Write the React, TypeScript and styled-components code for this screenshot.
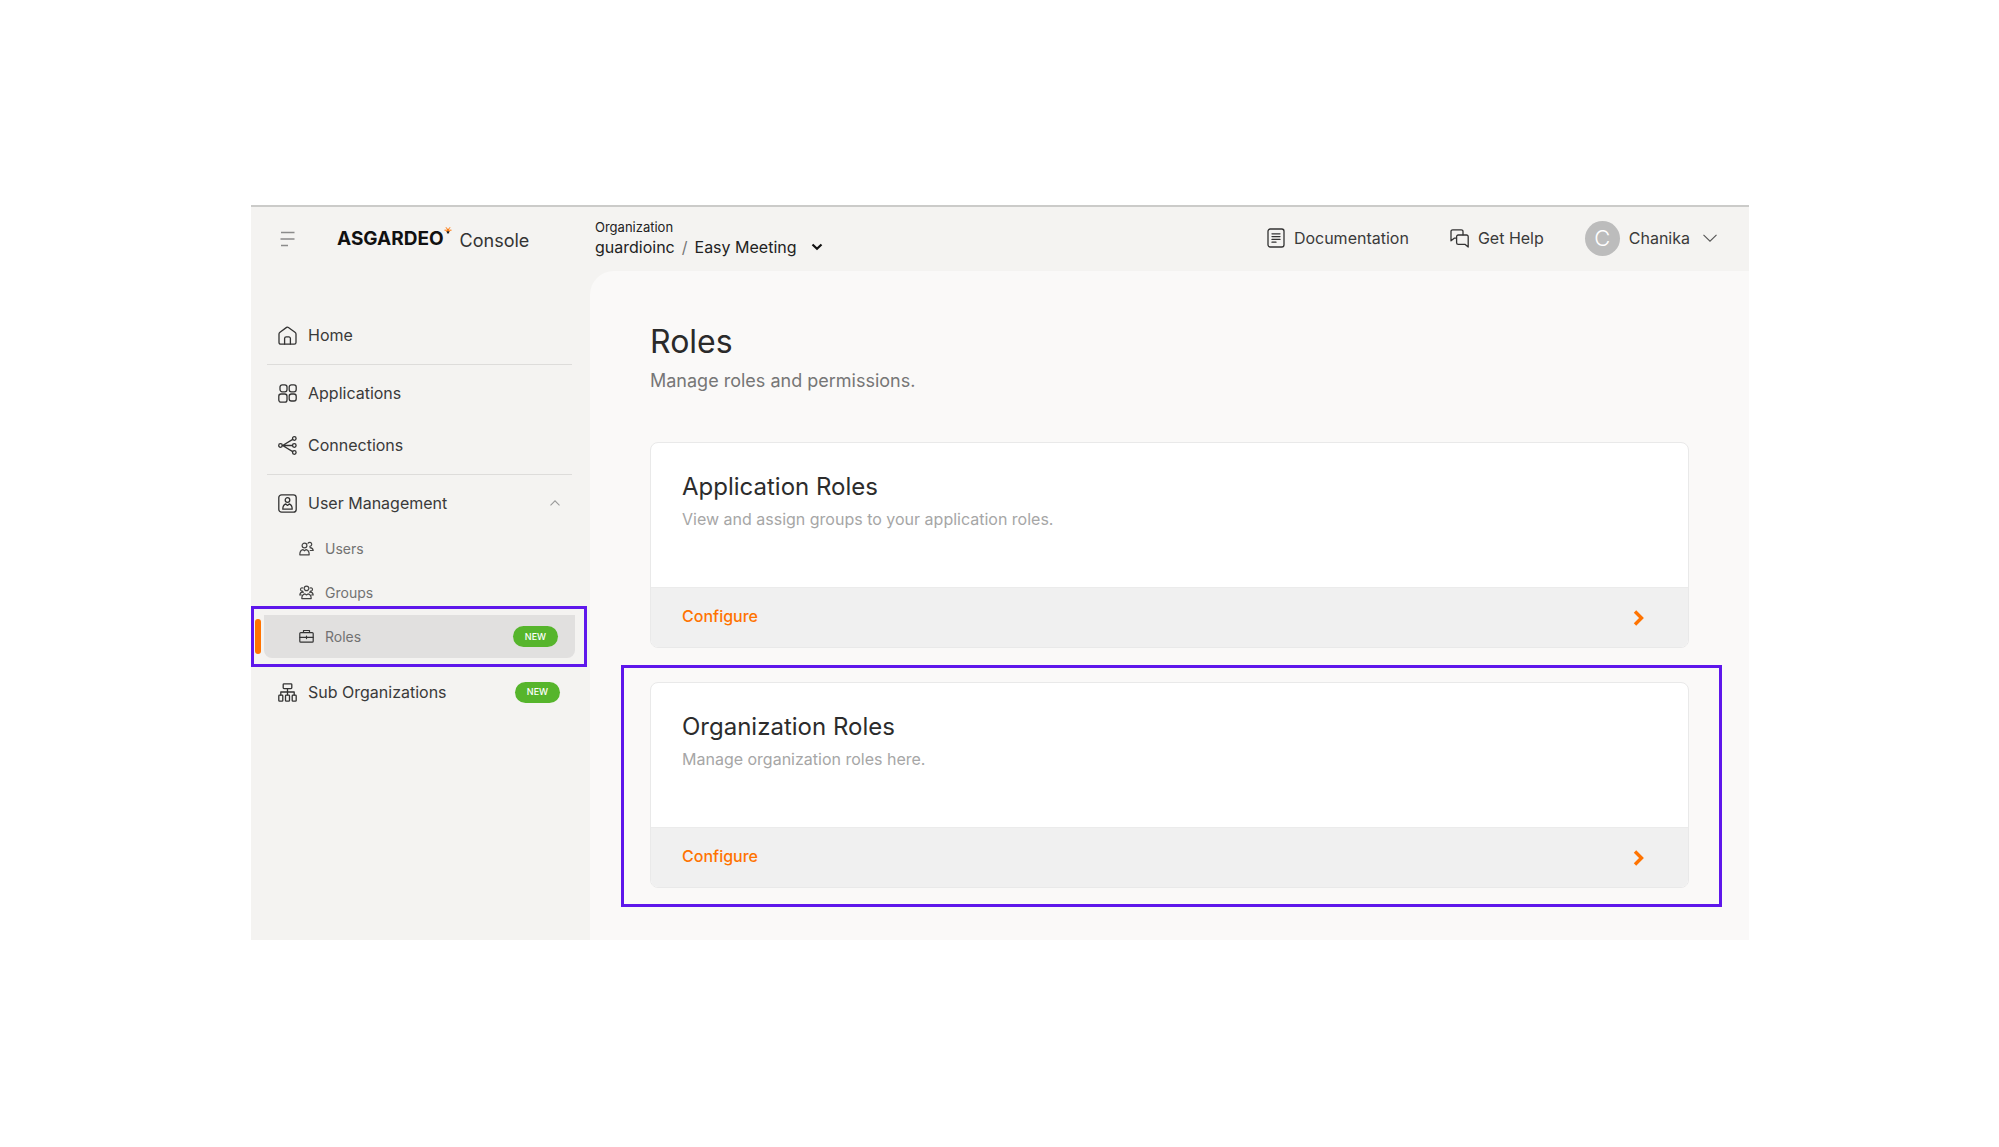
import React from "react";
import styled, { createGlobalStyle, css } from "styled-components";

const accent = "#ff7300";
const highlight = "#5e17eb";

const GlobalStyle = createGlobalStyle`
  *, *::before, *::after { box-sizing: border-box; }
  body {
    margin: 0;
    background: #fff;
    color: #3a3a3a;
    font-family: Inter, "Liberation Sans", sans-serif;
    font-size: 16px;
    line-height: 20px;
  }
  button { font: inherit; color: inherit; background: none; border: 0; padding: 0; cursor: pointer; text-align: left; }
  a { color: inherit; text-decoration: none; }
  h1, h2, p, ul { margin: 0; padding: 0; font-weight: 400; }
  ul { list-style: none; }
  svg { display: block; flex: none; }
`;

const Page = styled.div`
  padding: 205px 250px 0 251px;
`;

const Shell = styled.div`
  background: #f4f3f1;
  border-top: 2px solid #cbcbc9;
`;

const Header = styled.header`
  display: flex;
  align-items: center;
  height: 64px;
`;

const Brand = styled.div`
  display: flex;
  align-items: center;
  width: 344px;
  padding-left: 29px;
`;

const LogoLink = styled.a`
  display: flex;
  align-items: center;
  margin-left: 42px;
  color: #111;
`;

const LogoWord = styled.span`
  font-size: 19px;
  font-weight: 700;
`;

const Spark = styled.svg`
  align-self: flex-start;
`;

const Product = styled.span`
  margin-left: 8px;
  padding-top: 4px;
  font-size: 18px;
  color: #333;
`;

const OrgSwitch = styled.button`
  display: flex;
  flex-direction: column;
  gap: 1px;
  padding-bottom: 4px;
  color: #222;
`;

const OrgLabel = styled.span`
  font-size: 13px;
  line-height: 18px;
`;

const OrgPath = styled.span`
  display: flex;
  align-items: center;
  gap: 7px;
  & > svg { margin-left: 7px; }
`;

const Slash = styled.span`
  color: #777;
`;

const Tools = styled.div`
  display: flex;
  align-items: center;
  margin-left: auto;
  padding: 0 32px 2px 0;
  gap: 41px;
`;

const ToolLink = styled.a`
  display: flex;
  align-items: center;
  gap: 9px;
`;

const UserMenu = styled.button`
  display: flex;
  align-items: center;
  gap: 9px;
  & > svg { margin-left: 4px; }
`;

const Avatar = styled.span`
  display: grid;
  place-items: center;
  width: 35px;
  height: 35px;
  border-radius: 50%;
  background: #bcbcbc;
  color: #fff;
  font-size: 22px;
  font-weight: 300;
`;

const Body = styled.div`
  display: grid;
  grid-template-columns: 339px minmax(0, 1fr);
`;

const Sidebar = styled.nav`
  padding: 42px 12px 0 13px;
`;

const NavRow = css`
  display: flex;
  align-items: center;
  width: 100%;
  height: 44px;
  padding: 0 18px 0 14px;
  gap: 11px;
`;

const NavLink = styled.a`
  ${NavRow}
`;

const NavToggle = styled.button`
  ${NavRow}
`;

const NavGroup = styled.div`
  display: grid;
  gap: 8px;
`;

const Divider = styled.hr`
  height: 1px;
  margin: 7px 6px 6px 3px;
  border: 0;
  background: #dddcda;
`;

const SubList = styled.ul`
  display: grid;
  gap: 1px;
  margin: 2px 0 12px;
`;

const SubItem = styled.li<{ $active?: boolean }>`
  position: relative;
  ${(p) =>
    p.$active &&
    css`
      &::before {
        content: "";
        position: absolute;
        left: -9px;
        top: 4px;
        bottom: 4px;
        width: 6px;
        border-radius: 3px;
        background: ${accent};
      }
      &::after {
        content: "";
        position: absolute;
        inset: -9px -9px -9px -13px;
        border: 3px solid ${highlight};
        pointer-events: none;
      }
    `}
`;

const SubLink = styled.a<{ $active?: boolean }>`
  display: flex;
  align-items: center;
  gap: 11px;
  height: 43px;
  margin-right: 3px;
  padding: 0 17px 0 35px;
  border-radius: 0 0 8px 8px;
  background: ${(p) => (p.$active ? "#e1e0df" : "transparent")};
  color: #727272;
  font-size: 14px;
`;

const Badge = styled.span`
  display: grid;
  place-items: center;
  width: 45px;
  height: 21px;
  margin-left: auto;
  border-radius: 11px;
  background: #56b52c;
  color: #fff;
  font-size: 9px;
  font-weight: 500;
`;

const EndIcon = styled.svg`
  margin-left: auto;
`;

const Content = styled.main`
  padding: 53px 60px 52px;
  border-top-left-radius: 24px;
  background: #faf9f8;
`;

const Title = styled.h1`
  font-size: 32px;
  line-height: 36px;
  color: #2a2a2a;
`;

const Subtitle = styled.p`
  margin-top: 9px;
  font-size: 18px;
  line-height: 24px;
  color: #767676;
`;

const Cards = styled.div`
  display: grid;
  gap: 34px;
  margin-top: 49px;
`;

const Card = styled.section<{ $marked?: boolean }>`
  position: relative;
  border: 1px solid #e9e9e9;
  border-radius: 8px;
  background: #fff;
  ${(p) =>
    p.$marked &&
    css`
      &::after {
        content: "";
        position: absolute;
        inset: -18px -34px -20px -30px;
        border: 3px solid ${highlight};
        pointer-events: none;
      }
    `}
`;

const CardBody = styled.div`
  height: 144px;
  padding: 30px 31px;
`;

const CardTitle = styled.h2`
  font-size: 24px;
  line-height: 28px;
  color: #2c2c2c;
`;

const CardText = styled.p`
  margin-top: 8px;
  color: #a6a6a6;
`;

const CardAction = styled.button`
  display: flex;
  align-items: center;
  justify-content: space-between;
  width: 100%;
  height: 60px;
  padding: 0 44px 0 31px;
  border-top: 1px solid #ebebeb;
  border-radius: 0 0 7px 7px;
  background: #f0f0f0;
  color: ${accent};
  font-weight: 500;
`;

const ActionLabel = styled.span`
  padding-bottom: 4px;
`;

const line = {
  fill: "none",
  stroke: "#333",
  strokeWidth: 1.3,
  strokeLinecap: "round" as const,
  strokeLinejoin: "round" as const,
};

const MenuIcon = () => (
  <svg width="15" height="16" viewBox="0 0 15 16" fill="none" stroke="#8b8b8b" strokeWidth="1.3">
    <path d="M1 1.5h13.500M.5 8h14M1 14.500h7" />
  </svg>
);

const HomeIcon = () => (
  <svg width="19" height="19" viewBox="0 0 19 19" {...line}>
    <path d="M2 6.200 8.600 1.400a1.500 1.500 0 0 1 1.800 0L17 6.200a2.400 2.400 0 0 1 1 1.900v8.400a1.700 1.700 0 0 1-1.700 1.700H2.700A1.700 1.700 0 0 1 1 16.500V8.100a2.400 2.400 0 0 1 1-1.900z" />
    <path d="M6.600 18v-5.500a1.600 1.600 0 0 1 1.600-1.600h2.600a1.600 1.600 0 0 1 1.600 1.600V18" />
  </svg>
);

const AppsIcon = () => (
  <svg width="19" height="19" viewBox="0 0 19 19" {...line}>
    <rect x="2" y=".8" width="7" height="7" rx="2.200" />
    <rect x="11.200" y=".8" width="7" height="7" rx="2.200" />
    <rect x=".8" y="10" width="8.200" height="8.200" rx="2.200" />
    <rect x="11.200" y="10" width="7" height="7" rx="2.200" />
  </svg>
);

const ConnectionsIcon = () => (
  <svg width="19" height="19" viewBox="0 0 19 19" {...line}>
    <circle cx="2.500" cy="9.500" r="1.800" />
    <circle cx="16.300" cy="2.500" r="1.800" />
    <circle cx="16.300" cy="9.500" r="1.800" />
    <circle cx="16.300" cy="16.500" r="1.800" />
    <path d="M4.300 9.500h10.200M5 9.200 14.700 3.400M5 9.800l9.700 5.800" />
  </svg>
);

const UserBoxIcon = () => (
  <svg width="19" height="19" viewBox="0 0 19 19" {...line}>
    <rect x=".8" y=".8" width="17.400" height="17.400" rx="2.800" />
    <circle cx="9.500" cy="6" r="2.300" />
    <path d="M4.800 15.200c0-3.200 1.200-4.700 3-5.200l1.700 1.400 1.700-1.400c1.800.5 3 2 3 5.200z" />
  </svg>
);

const UsersIcon = () => (
  <svg width="15" height="15" viewBox="0 0 15 15" {...line} strokeWidth={1.2} stroke="#444">
    <circle cx="5.500" cy="4.500" r="2.400" />
    <path d="M.8 13.800c0-3.200 1.100-4.800 3-5.200l1.700 1.200 1.700-1.200c1.900.4 3 2 3 5.200z" />
    <path d="M9 2.300a2 2 0 1 1 1.800 3M11 6.700c2 .2 3 1 3.200 2.800h-3" />
  </svg>
);

const GroupsIcon = () => (
  <svg width="15" height="15" viewBox="0 0 15 15" {...line} strokeWidth={1.2} stroke="#444">
    <circle cx="7.500" cy="3.400" r="2.300" />
    <path d="M2.800 13.600c0-3 1.400-4.400 3.200-4.700l1.500 1 1.500-1c1.800.3 3.200 1.700 3.200 4.700z" />
    <path d="M3.800 3a1.600 1.600 0 1 0-.3 3M11.200 3a1.600 1.600 0 1 1 .3 3M4.500 7.200C2.300 7 1 8 .8 10h1.700M10.500 7.200c2.200-.2 3.500.8 3.700 2.800h-1.700" />
  </svg>
);

const RolesIcon = () => (
  <svg width="15" height="15" viewBox="0 0 15 15" {...line} strokeWidth={1.2}>
    <rect x=".8" y="3.600" width="13.400" height="9.600" rx="1" />
    <path d="M4.500 3.400V1.500h6v1.900M1 8.300h13M7.500 7v2.600M6.300 8.300h2.400" />
  </svg>
);

const OrgsIcon = () => (
  <svg width="19" height="19" viewBox="0 0 19 19" {...line}>
    <rect x="5.200" y=".8" width="8.600" height="4.800" rx=".8" />
    <rect x=".8" y="12.200" width="4" height="6" rx=".8" />
    <rect x="7.500" y="12.200" width="4" height="6" rx=".8" />
    <rect x="14.200" y="12.200" width="4" height="6" rx=".8" />
    <path d="M9.500 5.800v6M2.800 12V9h13.400v3" />
  </svg>
);

const DocIcon = () => (
  <svg width="18" height="20" viewBox="0 0 18 20" {...line}>
    <rect x="1" y="1" width="16" height="18" rx="2.200" />
    <path d="M5 5.800h8M5 8.600h8M5 11.400h8M5 14.200h4" />
  </svg>
);

const ChatIcon = () => (
  <svg width="19" height="19" viewBox="0 0 19 19" {...line}>
    <path d="M6.400 9.200H4.200L1 11.800V2.500A1.700 1.700 0 0 1 2.700.8h8.600A1.700 1.700 0 0 1 13 2.500v3.300" />
    <path d="M8.300 6h8.200a1.700 1.700 0 0 1 1.700 1.700V18l-3-2.600H8.300a1.700 1.700 0 0 1-1.700-1.700v-6A1.700 1.700 0 0 1 8.300 6z" />
  </svg>
);

const SparkIcon = () => (
  <Spark width="8" height="8" viewBox="0 0 8 8" fill="none" aria-hidden="true">
    <path d="M2 .3 4 3 6 .3M.5 3.200h7M4 3.200 2.200 5M4 3.200 5.800 5" stroke={accent} strokeWidth="1" />
    <path d="M2.900 4.200h2.200v2.200H2.900z" fill="#222" />
  </Spark>
);

const CardArrow = () => (
  <svg width="11" height="16" viewBox="0 0 11 16" fill="none" stroke={accent} strokeWidth="3.400">
    <path d="M2 1.500 8.500 8 2 14.500" />
  </svg>
);

const CaretDown = () => (
  <svg width="12" height="8" viewBox="0 0 12 8" fill="none" stroke="#111" strokeWidth="2.200">
    <path d="m1.500 1.500 4.500 4.300 4.500-4.300" />
  </svg>
);

const subItems = [
  { label: "Users", icon: <UsersIcon /> },
  { label: "Groups", icon: <GroupsIcon /> },
  { label: "Roles", icon: <RolesIcon />, active: true },
];

const cards = [
  { title: "Application Roles", text: "View and assign groups to your application roles." },
  { title: "Organization Roles", text: "Manage organization roles here.", marked: true },
];

export default function App() {
  return (
    <>
      <GlobalStyle />
      <Page>
        <Shell>
          <Header>
            <Brand>
              <button type="button" aria-label="Toggle menu">
                <MenuIcon />
              </button>
              <LogoLink href="#">
                <LogoWord>ASGARDEO</LogoWord>
                <SparkIcon />
                <Product>Console</Product>
              </LogoLink>
            </Brand>
            <OrgSwitch type="button">
              <OrgLabel>Organization</OrgLabel>
              <OrgPath>
                <span>guardioinc</span>
                <Slash>/</Slash>
                <span>Easy Meeting</span>
                <CaretDown />
              </OrgPath>
            </OrgSwitch>
            <Tools>
              <ToolLink href="#">
                <DocIcon />
                Documentation
              </ToolLink>
              <ToolLink href="#">
                <ChatIcon />
                Get Help
              </ToolLink>
              <UserMenu type="button">
                <Avatar>C</Avatar>
                Chanika
                <svg width="14" height="8" viewBox="0 0 14 8" fill="none" stroke="#555" strokeWidth="1.1">
                  <path d="m.5.8 6.500 6.400L13.500.8" />
                </svg>
              </UserMenu>
            </Tools>
          </Header>
          <Body>
            <Sidebar>
              <NavLink href="#">
                <HomeIcon />
                Home
              </NavLink>
              <Divider />
              <NavGroup>
                <NavLink href="#">
                  <AppsIcon />
                  Applications
                </NavLink>
                <NavLink href="#">
                  <ConnectionsIcon />
                  Connections
                </NavLink>
              </NavGroup>
              <Divider />
              <NavToggle type="button" aria-expanded="true">
                <UserBoxIcon />
                User Management
                <EndIcon width="10" height="6" viewBox="0 0 10 6" fill="none" stroke="#999" strokeWidth="1.1">
                  <path d="M.5 5.300 5 .8l4.500 4.500" />
                </EndIcon>
              </NavToggle>
              <SubList>
                {subItems.map((item) => (
                  <SubItem key={item.label} $active={item.active}>
                    <SubLink href="#" $active={item.active}>
                      {item.icon}
                      {item.label}
                      {item.active && <Badge>NEW</Badge>}
                    </SubLink>
                  </SubItem>
                ))}
              </SubList>
              <NavLink href="#">
                <OrgsIcon />
                Sub Organizations
                <Badge>NEW</Badge>
              </NavLink>
            </Sidebar>
            <Content>
              <Title>Roles</Title>
              <Subtitle>Manage roles and permissions.</Subtitle>
              <Cards>
                {cards.map((card) => (
                  <Card key={card.title} $marked={card.marked}>
                    <CardBody>
                      <CardTitle>{card.title}</CardTitle>
                      <CardText>{card.text}</CardText>
                    </CardBody>
                    <CardAction type="button">
                      <ActionLabel>Configure</ActionLabel>
                      <CardArrow />
                    </CardAction>
                  </Card>
                ))}
              </Cards>
            </Content>
          </Body>
        </Shell>
      </Page>
    </>
  );
}
